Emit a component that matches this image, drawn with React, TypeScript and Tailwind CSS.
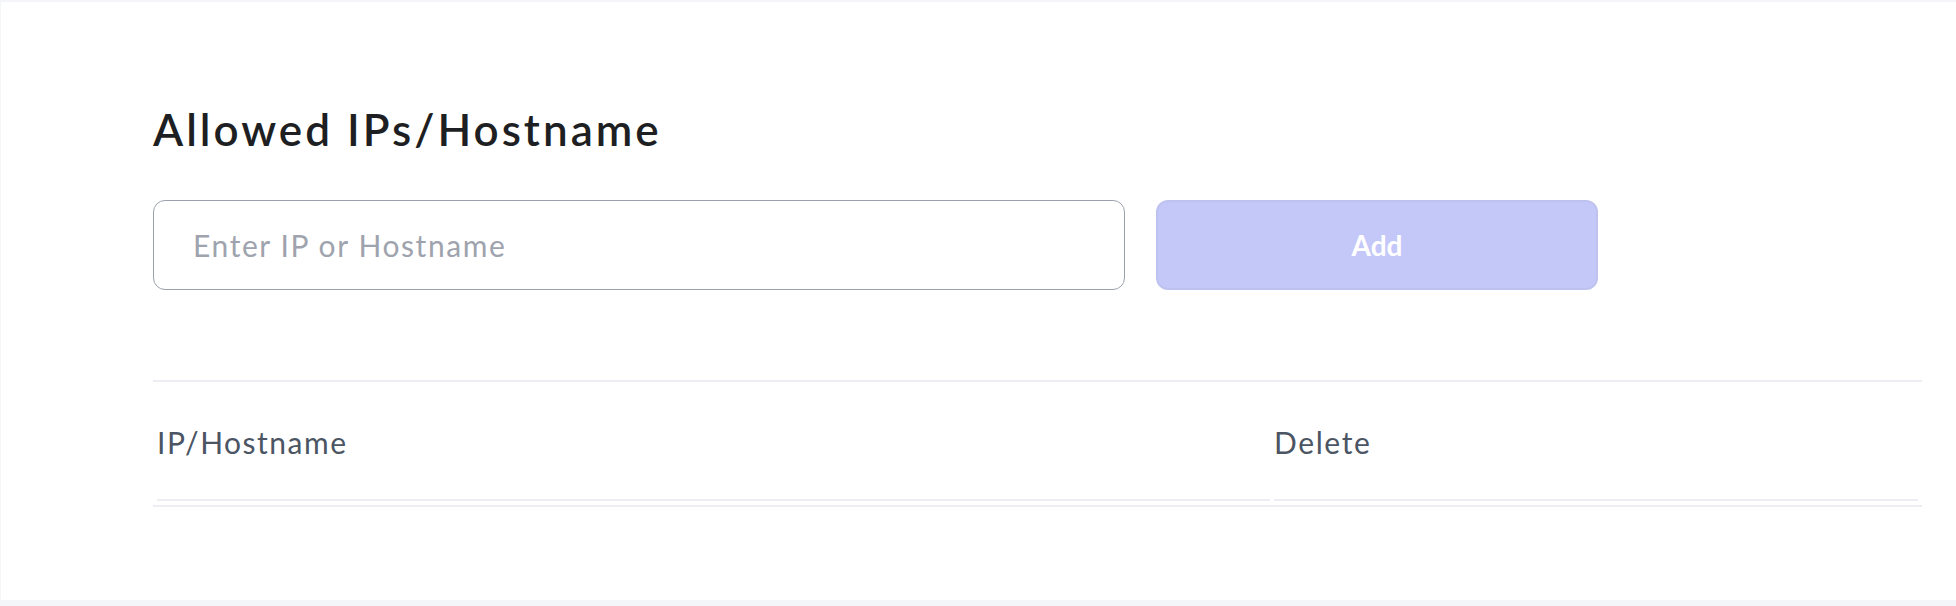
import { useState } from 'react';

export default function App() {
  const [host, setHost] = useState('');

  return (
    <div className="min-h-screen bg-[#f4f5f8] pt-[2px] pb-[6px] pl-px" style={{ fontFamily: 'Lato, "Noto Sans", sans-serif' }}>
      <div className="bg-white h-[598px] pt-[101px] pl-[152px] pr-[34px]">
        {/* Title */}
        <h1 className="text-[44px] leading-[1.2] font-semibold tracking-[3px] text-[#1e1f23]">Allowed IPs/Hostname</h1>

        {/* Add row */}
        <div className="flex gap-[31px] mt-[44px]">
          <input
            type="text"
            value={host}
            onChange={(e) => setHost(e.target.value)}
            placeholder="Enter IP or Hostname"
            className="w-[972px] h-[90px] rounded-xl border border-[#9ca1ad] pl-[39px] text-[30px] tracking-[1.6px] text-[#1e1f23] placeholder:text-[#9ea3ae] outline-none"
          />
          <button
            type="button"
            disabled={!host}
            className="w-[442px] h-[90px] rounded-xl bg-[#c4c8f9] border-2 border-[#bec2ee] text-white text-[28px] font-bold"
          >
            Add
          </button>
        </div>

        {/* Table */}
        <div className="mt-[90px] border-y-2 border-[#eceef3] p-1 flex gap-1">
          <div className="w-[1113px] pt-[38px] pb-[39px] border-b-2 border-[#eceef3] text-[30px] leading-[36px] tracking-[1.5px] text-[#4b5563]">
            IP/Hostname
          </div>
          <div className="flex-1 pt-[38px] pb-[39px] border-b-2 border-[#eceef3] text-[30px] leading-[36px] tracking-[1.6px] text-[#4b5563]">
            Delete
          </div>
        </div>
      </div>
    </div>
  );
}
